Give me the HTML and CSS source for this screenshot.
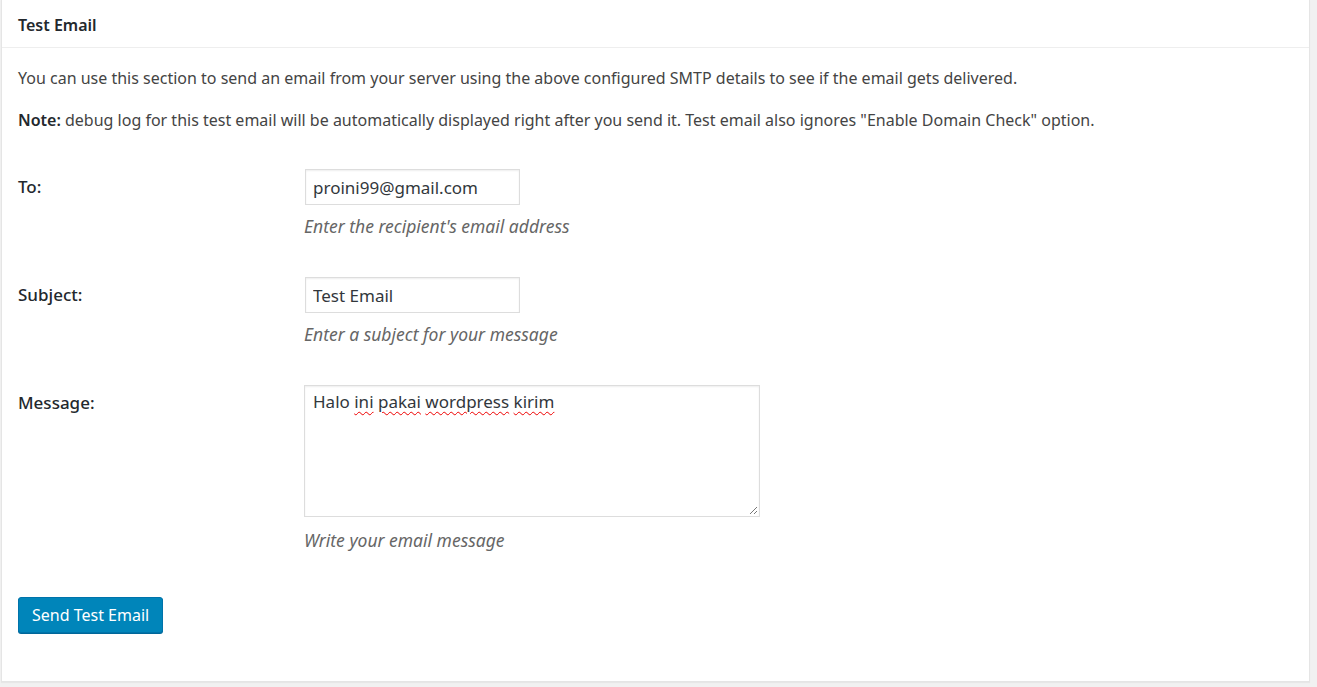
FILE: index.html
```html
<!DOCTYPE html>
<html>
<head>
<meta charset="utf-8">
<link rel="stylesheet" href="styles.css">
</head>
<body>
<div class="panel">
  <h3 class="panel-title">Test Email</h3>
  <div class="panel-body">
    <p class="intro">You can use this section to send an email from your server using the above configured SMTP details to see if the email gets delivered.</p>
    <p class="intro"><strong>Note:</strong> debug log for this test email will be automatically displayed right after you send it. Test email also ignores "Enable Domain Check" option.</p>
    <div class="form">
      <div class="row">
        <label class="label">To:</label>
        <div class="field">
          <input class="text" type="text" value="proini99@gmail.com">
          <p class="desc">Enter the recipient's email address</p>
        </div>
      </div>
      <div class="row">
        <label class="label">Subject:</label>
        <div class="field">
          <input class="text" type="text" value="Test Email">
          <p class="desc">Enter a subject for your message</p>
        </div>
      </div>
      <div class="row">
        <label class="label">Message:</label>
        <div class="field">
          <div class="textarea"><span>Halo </span><span class="sp">ini</span> <span class="sp">pakai</span> <span class="sp">wordpress</span> <span class="sp">kirim</span><svg class="grip" width="10" height="10" viewBox="0 0 10 10"><path d="M9 2L2 9M9 6L6 9" stroke="#777" stroke-width="1"/></svg></div>
          <p class="desc desc-msg">Write your email message</p>
        </div>
      </div>
    </div>
    <button class="btn">Send Test Email</button>
  </div>
</div>
</body>
</html>
```
FILE: styles.css
```css
html, body {
  margin: 0;
  padding: 0;
  background: #f1f1f1;
}
body {
  font-family: "Noto Sans", "Open Sans", sans-serif;
  color: #444;
  font-size: 16px;
  padding: 0 7px 5px 1px;
}
.panel {
  background: #fff;
  border: 1px solid #e5e5e5;
  border-top: none;
  box-shadow: 0 1px 1px rgba(0,0,0,.04);
  height: 682px;
  box-sizing: border-box;
}
.panel-title {
  margin: 0;
  font-size: 16px;
  font-weight: 600;
  color: #23282d;
  padding: 0 16px;
  height: 47px;
  line-height: 50px;
  border-bottom: 1px solid #eee;
}
.panel-body {
  padding: 0 16px;
}
.intro {
  margin: 18px 0 0;
  line-height: 24px;
  font-size: 16px;
}
.intro + .intro {
  margin-top: 18px;
}
.intro strong {
  font-weight: 600;
  color: #23282d;
}
.form {
  margin-top: 37px;
}
.row {
  display: grid;
  grid-template-columns: 286px 1fr;
  margin-bottom: 39px;
}
.label {
  font-weight: 500;
  color: #23282d;
  font-size: 17px;
  line-height: 36px;
}
.field {
  display: flex;
  flex-direction: column;
  align-items: flex-start;
}
.text {
  width: 215px;
  height: 36px;
  box-sizing: border-box;
  border: 1px solid #ddd;
  box-shadow: inset 0 1px 2px rgba(0,0,0,.07);
  padding: 0 7px;
  font-family: inherit;
  font-size: 17px;
  color: #32373c;
  margin: 0 0 0 1px;
  outline: none;
}
.desc {
  margin: 9px 0 0;
  font-style: italic;
  font-size: 17.5px;
  color: #666;
  line-height: 24px;
}
.desc-msg {
  margin-top: 11px;
}
.textarea {
  position: relative;
  width: 456px;
  height: 132px;
  box-sizing: border-box;
  border: 1px solid #ddd;
  box-shadow: inset 0 1px 2px rgba(0,0,0,.07);
  padding: 4px 8px;
  font-size: 17px;
  color: #32373c;
  line-height: 24px;
}
.sp {
  text-decoration: underline wavy #e00;
  text-decoration-thickness: 1px;
  text-underline-offset: 3px;
}
.grip {
  position: absolute;
  right: 1px;
  bottom: 1px;
}
.btn {
  display: block;
  margin-top: 45px;
  background: #0085ba;
  border: 1px solid #0073aa;
  border-radius: 3px;
  box-shadow: 0 1px 0 #006799;
  color: #fff;
  font-family: inherit;
  font-size: 16px;
  height: 36px;
  padding: 0 13px;
  line-height: 34px;
}
```
